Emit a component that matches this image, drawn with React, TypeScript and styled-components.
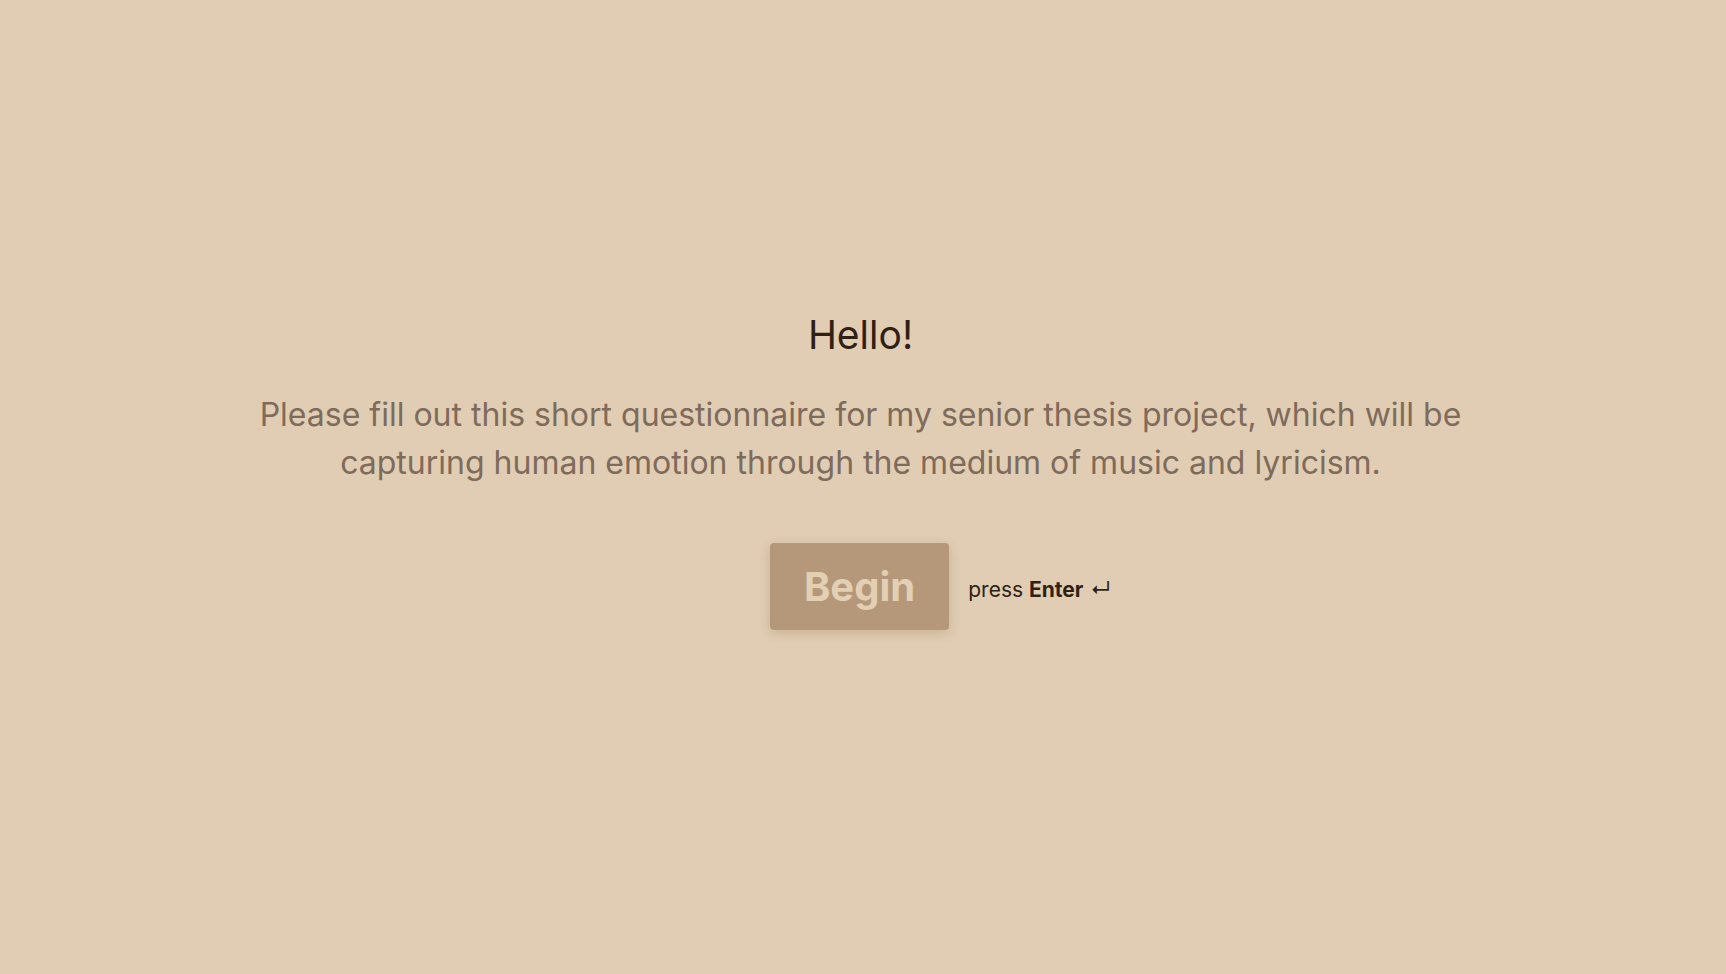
import React from "react";
import styled, { createGlobalStyle } from "styled-components";

const GlobalStyle = createGlobalStyle`
  html, body {
    margin: 0;
    padding: 0;
    background: #e1cdb3;
  }
  body {
    font-family: Inter, "Noto Sans", "Liberation Sans", sans-serif;
  }
`;

const Page = styled.main`
  width: 100%;
  height: 974px;
  display: flex;
  flex-direction: column;
  align-items: center;
  justify-content: center;
  background: #e1cdb3;
  box-sizing: border-box;
  padding: 0 5px 34px 0;
`;

const Title = styled.h1`
  margin: 0;
  font-size: 39px;
  font-weight: 400;
  line-height: 48px;
  color: #2f1f15;
  text-align: center;
`;

const Lead = styled.p`
  margin: 32px 0 0;
  max-width: 1260px;
  font-size: 32px;
  font-weight: 400;
  line-height: 48px;
  color: #7e6b5b;
  text-align: center;
`;

const Actions = styled.div`
  display: flex;
  align-items: center;
  gap: 19px;
  margin-top: 56px;
  margin-left: 160px;
`;

const BeginButton = styled.button`
  border: none;
  border-radius: 4px;
  background: #b59879;
  color: #e3cfb4;
  font-family: inherit;
  font-size: 40px;
  font-weight: 700;
  padding: 0 34px;
  height: 87px;
  box-shadow: 0 3px 12px rgba(90, 60, 30, 0.18);
  cursor: pointer;
`;

const Hint = styled.span`
  font-size: 21px;
  color: #2f1f15;
  display: inline-flex;
  align-items: center;
  gap: 7px;
  padding-top: 6px;

  b {
    font-weight: 700;
  }
`;

export default function App() {
  return (
    <>
      <GlobalStyle />
      <Page>
        <Title>Hello!</Title>
        <Lead>
          Please fill out this short questionnaire for my senior thesis project, which will be
          capturing human emotion through the medium of music and lyricism.
        </Lead>
        <Actions>
          <BeginButton>Begin</BeginButton>
          <Hint>
            <span>
              press <b>Enter</b>
            </span>
            <span>↵</span>
          </Hint>
        </Actions>
      </Page>
    </>
  );
}
